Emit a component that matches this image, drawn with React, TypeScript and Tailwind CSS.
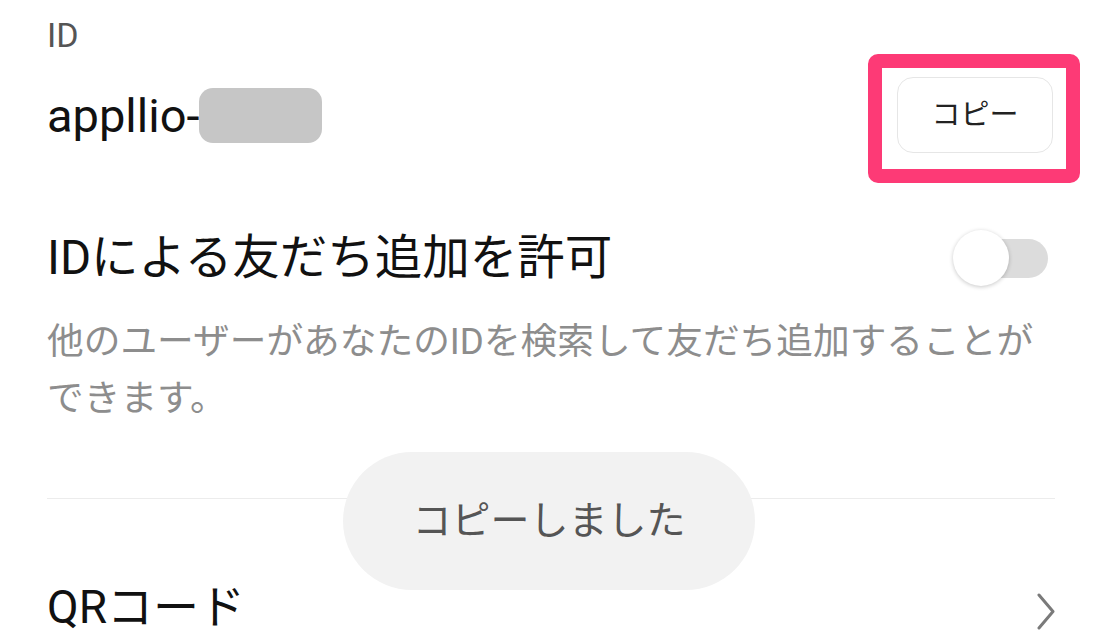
const font = { fontFamily: "Roboto, 'Noto Sans CJK JP', sans-serif" };

function Toggle() {
  return (
    <div className="relative w-[95px] h-[57px] mr-[7px] shrink-0">
      <div className="absolute left-[7px] right-0 top-[9px] h-[39px] rounded-full bg-[#dcdcdc]" />
      <div className="absolute left-0 top-0 w-[56px] h-[56px] rounded-full bg-white shadow-[0_1px_4px_rgba(0,0,0,0.22)]" />
    </div>
  );
}

export default function App() {
  return (
    <div className="relative w-[1100px] h-[643px] overflow-hidden bg-white" style={font}>
      <div className="pl-[47px] pr-[45px]">
        <div className="pt-[18px] text-[34px] leading-none text-[#555]">ID</div>

        <div className="mt-[25px] flex items-center justify-between h-[76px]">
          <div className="flex items-center">
            <span className="text-[47px] leading-none text-[#111]">appllio-</span>
            <span className="inline-block w-[123px] h-[55px] rounded-[14px] bg-[#c6c6c6]" />
          </div>
          <div className="relative mr-[2px]">
            <button
              type="button"
              className="w-[156px] h-[76px] rounded-[16px] border border-[#e6e6e6] bg-white text-[29px] leading-none text-[#222]"
            >
              コピー
            </button>
            <div className="absolute left-[-29px] top-[-23px] w-[212px] h-[129px] border-[14px] border-[#fd3a76] rounded-[10px] pointer-events-none" />
          </div>
        </div>

        <div className="mt-[77px] flex items-center justify-between h-[57px]">
          <span className="text-[47.5px] leading-none text-[#111]">IDによる友だち追加を許可</span>
          <Toggle />
        </div>

        <p className="mt-[26px] text-[36.7px] leading-[57px] text-[#8d8d8d]">
          他のユーザーがあなたのIDを検索して友だち追加することができます。
        </p>

        <div className="mt-[71px] h-px bg-[#ececec]" />

        <div className="mt-[85px] flex items-center justify-between">
          <span className="text-[46px] leading-none text-[#111]">QRコード</span>
          <svg width="18" height="37" viewBox="0 0 18 37" className="mt-[8px]">
            <polyline points="2,2 16,18.5 2,35" fill="none" stroke="#7a7a7a" strokeWidth="3" strokeLinecap="round" strokeLinejoin="round" />
          </svg>
        </div>
      </div>

      <div className="absolute left-[343px] top-[452px] w-[412px] h-[138px] rounded-full bg-[#f2f2f2] flex items-center justify-center">
        <span className="text-[39px] leading-none text-[#555]">コピーしました</span>
      </div>
    </div>
  );
}
